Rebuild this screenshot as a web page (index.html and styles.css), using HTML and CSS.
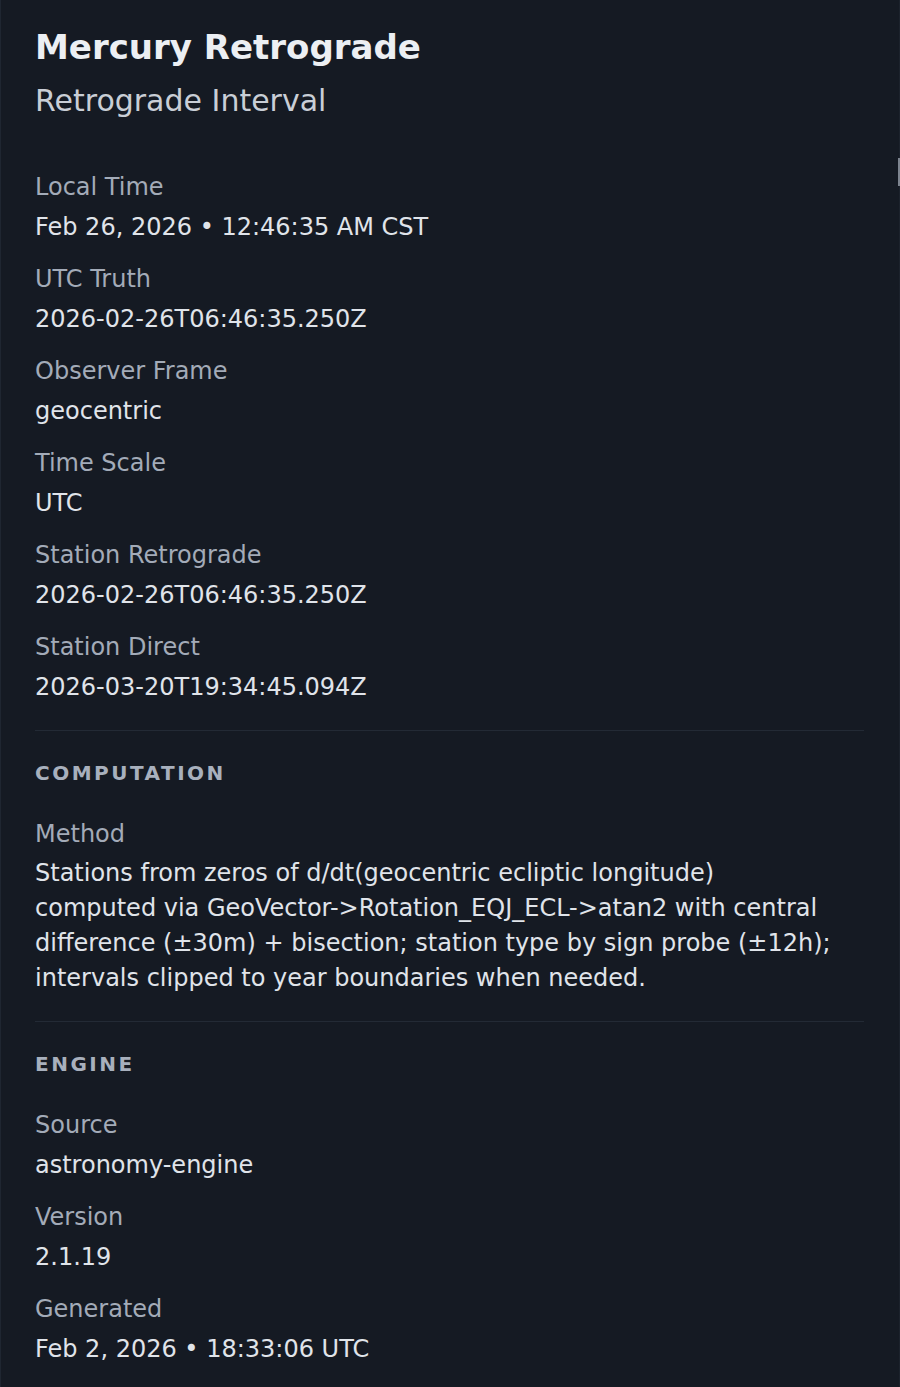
FILE: index.html
```html
<!DOCTYPE html>
<html lang="en">
<head>
  <meta charset="UTF-8" />
  <title>Mercury Retrograde</title>
  <meta name="viewport" content="width=device-width, initial-scale=1.0" />
  <link rel="stylesheet" href="styles.css">
</head>
<body>

<aside class="panel">
  <div class="scroll-thumb"></div>

  <header class="panel-head">
    <h1>Mercury Retrograde</h1>
    <h2>Retrograde Interval</h2>
  </header>

  <dl class="facts">
    <div class="fact">
      <dt>Local Time</dt>
      <dd>Feb 26, 2026 • 12:46:35 AM CST</dd>
    </div>
    <div class="fact">
      <dt>UTC Truth</dt>
      <dd>2026-02-26T06:46:35.250Z</dd>
    </div>
    <div class="fact">
      <dt>Observer Frame</dt>
      <dd>geocentric</dd>
    </div>
    <div class="fact">
      <dt>Time Scale</dt>
      <dd>UTC</dd>
    </div>
    <div class="fact">
      <dt>Station Retrograde</dt>
      <dd>2026-02-26T06:46:35.250Z</dd>
    </div>
    <div class="fact">
      <dt>Station Direct</dt>
      <dd>2026-03-20T19:34:45.094Z</dd>
    </div>
  </dl>

  <section class="block">
    <h3>Computation</h3>
    <dl class="facts">
      <div class="fact">
        <dt>Method</dt>
        <dd class="long">Stations from zeros of d/dt(geocentric ecliptic longitude)<br>
          computed via GeoVector-&gt;Rotation_EQJ_ECL-&gt;atan2 with central<br>
          difference (±30m) + bisection; station type by sign probe (±12h);<br>
          intervals clipped to year boundaries when needed.</dd>
      </div>
    </dl>
  </section>

  <section class="block">
    <h3>Engine</h3>
    <dl class="facts">
      <div class="fact">
        <dt>Source</dt>
        <dd>astronomy-engine</dd>
      </div>
      <div class="fact">
        <dt>Version</dt>
        <dd>2.1.19</dd>
      </div>
      <div class="fact">
        <dt>Generated</dt>
        <dd>Feb 2, 2026 • 18:33:06 UTC</dd>
      </div>
    </dl>
  </section>
</aside>

</body>
</html>
```

FILE: styles.css
```css
body {
  margin: 0;
  font-family: 'DejaVu Sans', 'Open Sans', sans-serif;
  background-color: #151a23;
}

.panel {
  position: relative;
  min-height: 1387px;
  box-sizing: border-box;
  padding: 26px 35px 20px 34px;
  border-left: 1px solid #1f2631;
  border-right: 1px solid #1c222c;
  background-color: #151a23;
}

.scroll-thumb {
  position: absolute;
  top: 158px;
  right: -1px;
  width: 2px;
  height: 28px;
  background-color: #7d848f;
}

.panel-head h1 {
  margin: 0 0 14px;
  font-size: 34px;
  line-height: 42px;
  font-weight: bold;
  color: #eceff3;
}

.panel-head h2 {
  margin: 0 0 51px;
  font-size: 30px;
  line-height: 38px;
  font-weight: normal;
  color: #c9ced6;
}

.facts {
  margin: 0;
}

.fact {
  margin: 0 0 20px;
}

.fact dt {
  font-size: 24px;
  line-height: 32px;
  color: #a3abb8;
}

.fact dd {
  margin: 8px 0 0;
  font-size: 24px;
  line-height: 32px;
  color: #e0e4ea;
}

.fact dd.long {
  margin-top: 6px;
  line-height: 35px;
  white-space: nowrap;
}

.block {
  border-top: 1px solid #232a35;
  margin-top: 27px;
  padding-top: 30px;
}

.block + .block {
  margin-top: 25px;
}

.block h3 {
  margin: 0 0 33px;
  font-size: 20px;
  line-height: 24px;
  font-weight: bold;
  letter-spacing: 2.5px;
  text-transform: uppercase;
  color: #a8b0bd;
}

.block .fact:last-child {
  margin-bottom: 0;
}
```
